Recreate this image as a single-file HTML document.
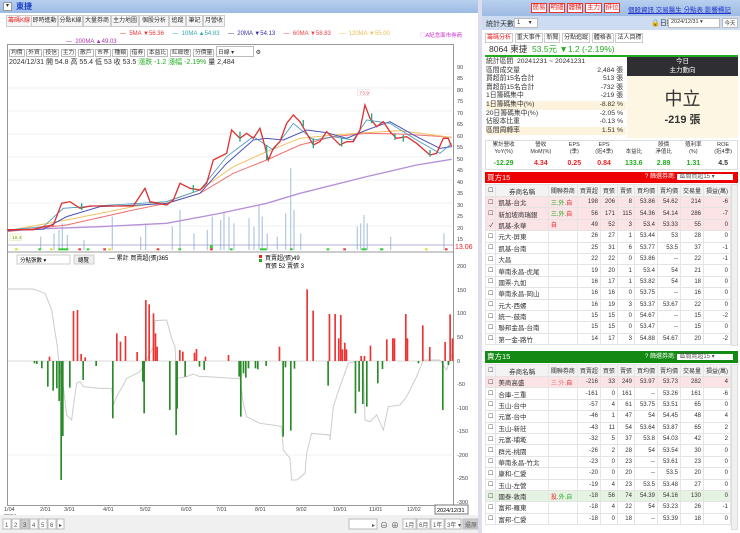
<!DOCTYPE html>
<html><head><meta charset="utf-8">
<style>
*{margin:0;padding:0;box-sizing:border-box}
body{width:740px;height:533px;overflow:hidden;background:#fff;font-family:"Liberation Sans","Noto Sans CJK TC",sans-serif;font-size:7px;color:#333;position:relative}
.a{position:absolute}
.bar{background:linear-gradient(#b9d0ee,#9dbbe3)}
.tab{position:absolute;top:15px;height:12px;border:1px solid #ccc;background:#f6f6f6;font-size:6px;line-height:10px;text-align:center;white-space:nowrap;overflow:hidden}
.rb{position:absolute;top:3px;height:10px;border:1px solid #e33;background:#fff;color:#e22;font-size:6.5px;line-height:8px;text-align:center}
table{border-collapse:collapse}
.t td{height:11.4px;border:1px solid #e4e4e4;font-size:6px;text-align:right;padding:0 2px;white-space:nowrap;overflow:hidden}
.t td:nth-child(1){width:7px}
.t td:nth-child(2){text-align:left;width:54px;font-size:6.5px}
.t td:nth-child(3){text-align:left;width:28px;color:#e22}
.pk td{background:#fbe3e6}.gr td{background:#e6f3e3}
.th td{background:#f3f3f3;text-align:center!important;height:12px}
.st div{height:8.6px;line-height:8.6px;font-size:6.8px;position:relative}
.st span{position:absolute;right:3px}
</style></head><body>
<div class="a bar" style="left:0;top:0;width:478px;height:13px"></div>
<div class="a" style="left:3px;top:2px;width:9px;height:9px;background:#fff;border:1px solid #999;font-size:6px;line-height:7px;text-align:center">▾</div>
<div class="a" style="left:16px;top:1px;font-size:8px;color:#1a3fc8;font-weight:bold">東捷</div>
<div class="tab" style="left:6px;width:26px;color:#e22">籌碼K線</div>
<div class="tab" style="left:31px;width:27px">即時進動</div>
<div class="tab" style="left:58px;width:25px">分點K線</div>
<div class="tab" style="left:83px;width:28px">大量券商</div>
<div class="tab" style="left:111px;width:28px">主力地圖</div>
<div class="tab" style="left:139px;width:30px">個股分析</div>
<div class="tab" style="left:169px;width:17px">追蹤</div>
<div class="tab" style="left:186px;width:17px">筆記</div>
<div class="tab" style="left:203px;width:22px">月營收</div>
<div class="a" style="left:120px;top:31px;font-size:6px;white-space:nowrap"><span style="color:#e33">— &nbsp;5MA ▼56.36</span> &nbsp;&nbsp;&nbsp;&nbsp;<span style="color:#3aa">— &nbsp;10MA ▲54.83</span> &nbsp;&nbsp;&nbsp;&nbsp;<span style="color:#33a">— &nbsp;20MA ▼54.13</span> &nbsp;&nbsp;&nbsp;&nbsp;<span style="color:#e44">— &nbsp;60MA ▼58.83</span> &nbsp;&nbsp;&nbsp;&nbsp;<span style="color:#eb5">— &nbsp;120MA ▼55.00</span></div>
<div class="a" style="left:420px;top:31px;font-size:5.5px;color:#c3c">◯A紀念面市券商</div>
<div class="a" style="left:66px;top:39px;font-size:6px;color:#a3a">— &nbsp;200MA ▲49.03</div>
<div class="a" style="left:7px;top:44px;width:447px;height:462px;border:1px solid #999"></div>
<div class="a" style="left:9px;top:46px;font-size:5.8px;white-space:nowrap">
<span style="border:1px solid #bbb;padding:0 1px">均價</span> <span style="border:1px solid #bbb;padding:0 1px">外資</span> <span style="border:1px solid #bbb;padding:0 1px">投信</span> <span style="border:1px solid #bbb;padding:0 1px">主力</span> <span style="border:1px solid #bbb;padding:0 1px">散戶</span> <span style="border:1px solid #bbb;padding:0 1px">市界</span> <span style="border:1px solid #bbb;padding:0 1px">種類</span> <span style="border:1px solid #bbb;padding:0 1px">借券</span> <span style="border:1px solid #bbb;padding:0 1px">本益比</span> <span style="border:1px solid #bbb;padding:0 1px">紅綠燈</span> <span style="border:1px solid #bbb;padding:0 1px">分價量</span> <span style="border:1px solid #bbb;padding:0 1px;display:inline-block;width:38px">日線 ▾</span> ⚙</div>
<div class="a" style="left:9px;top:57px;font-size:7px;white-space:nowrap">2024/12/31 開 54.8 高 55.4 低 53 收 53.5 <span style="color:#2a2"> 漲跌 -1.2 漲幅 -2.19%</span> 量 2,484</div>
<svg class="a" style="left:0;top:0" width="480" height="533">
<g font-size="5.5" fill="#444">
<text x="457" y="69">90</text><text x="457" y="80">85</text><text x="457" y="92">80</text><text x="457" y="103">75</text><text x="457" y="115">70</text><text x="457" y="126">65</text><text x="457" y="138">60</text><text x="457" y="149">55</text><text x="457" y="161">50</text><text x="457" y="172">45</text><text x="457" y="184">40</text><text x="457" y="195">35</text><text x="457" y="207">30</text><text x="457" y="218">25</text><text x="457" y="230">20</text><text x="457" y="241">15</text></g>
<g transform="translate(0,60) scale(0.3333)">
<g stroke="#eee" stroke-width="2"><line x1="24" y1="84" x2="1360" y2="84"/><line x1="24" y1="153" x2="1360" y2="153"/><line x1="24" y1="222" x2="1360" y2="222"/><line x1="24" y1="291" x2="1360" y2="291"/><line x1="24" y1="360" x2="1360" y2="360"/><line x1="24" y1="429" x2="1360" y2="429"/><line x1="24" y1="498" x2="1360" y2="498"/></g>
<g fill="#b8cce4">
<rect x="120" y="530" width="4" height="40"/><rect x="160" y="520" width="4" height="50"/><rect x="175" y="510" width="4" height="60"/><rect x="185" y="490" width="4" height="80"/><rect x="200" y="525" width="4" height="45"/><rect x="250" y="540" width="4" height="30"/><rect x="335" y="470" width="4" height="100"/><rect x="420" y="530" width="4" height="40"/><rect x="435" y="490" width="4" height="80"/><rect x="515" y="500" width="4" height="70"/><rect x="538" y="450" width="4" height="120"/><rect x="580" y="520" width="4" height="50"/><rect x="620" y="510" width="4" height="60"/><rect x="635" y="470" width="4" height="100"/><rect x="660" y="480" width="4" height="90"/><rect x="670" y="455" width="4" height="115"/><rect x="685" y="470" width="4" height="100"/><rect x="700" y="490" width="4" height="80"/><rect x="745" y="475" width="4" height="95"/><rect x="760" y="500" width="4" height="70"/><rect x="775" y="435" width="4" height="135"/><rect x="785" y="470" width="4" height="100"/><rect x="800" y="520" width="4" height="50"/><rect x="830" y="530" width="4" height="40"/><rect x="855" y="460" width="4" height="110"/><rect x="870" y="325" width="4" height="245"/><rect x="880" y="450" width="4" height="120"/><rect x="900" y="520" width="4" height="50"/><rect x="1070" y="500" width="4" height="70"/><rect x="1080" y="490" width="4" height="80"/><rect x="1090" y="465" width="4" height="105"/><rect x="1100" y="490" width="4" height="80"/><rect x="1170" y="530" width="4" height="40"/><rect x="1330" y="520" width="4" height="50"/></g>
<polyline fill="none" stroke="#b58fd8" stroke-width="4" points="22,510 300,500 500,490 650,462 800,430 900,400 1100,350 1250,315 1355,298"/>
<polyline fill="none" stroke="#f07070" stroke-width="3" points="22,515 200,495 400,450 500,430 600,400 700,340 800,300 900,255 1000,230 1100,220 1200,222 1300,228 1355,232"/>
<polyline fill="none" stroke="#f0c060" stroke-width="3" points="22,512 200,480 400,440 500,425 600,390 700,320 800,275 900,235 1000,225 1100,218 1200,212 1300,225 1355,232"/>
<polyline fill="none" stroke="#4a55b8" stroke-width="3" points="22,512 130,508 200,470 300,440 420,435 500,430 600,400 680,310 760,240 800,235 850,240 920,210 980,218 1040,235 1100,210 1170,185 1250,230 1320,265 1355,260"/>
<polyline fill="none" stroke="#49b" stroke-width="2.5" points="22,510 130,500 190,445 300,437 420,430 500,425 600,390 680,290 760,230 820,270 880,190 940,240 1000,230 1060,240 1100,180 1170,190 1250,240 1320,280 1355,250"/>
<polyline fill="none" stroke="#d33" stroke-width="4" points="22,509 100,509 130,500 160,495 185,430 210,425 240,445 270,438 330,438 400,438 435,385 450,425 500,435 520,420 540,370 570,385 600,390 620,370 640,300 660,290 680,280 695,210 720,235 740,220 760,235 780,205 795,260 805,300 820,265 840,245 860,190 880,165 900,185 920,220 940,255 960,245 980,215 1000,235 1020,255 1040,245 1060,245 1080,210 1095,135 1110,175 1130,200 1150,185 1170,215 1190,235 1220,230 1250,250 1290,285 1310,280 1330,235 1345,235 1355,260"/>
<g stroke="#2a8" stroke-width="4"><line x1="800" y1="255" x2="800" y2="300"/><line x1="940" y1="235" x2="940" y2="265"/><line x1="1025" y1="235" x2="1025" y2="260"/><line x1="1185" y1="220" x2="1185" y2="240"/><line x1="1290" y1="270" x2="1290" y2="290"/><line x1="245" y1="430" x2="245" y2="450"/><line x1="580" y1="375" x2="580" y2="395"/><line x1="720" y1="215" x2="720" y2="245"/><line x1="1115" y1="160" x2="1115" y2="190"/><line x1="910" y1="180" x2="910" y2="200"/><line x1="1210" y1="225" x2="1210" y2="245"/></g>
<rect x="1072" y="88" width="38" height="18" fill="#fff" stroke="#ccc"/><text x="1078" y="103" font-size="15" fill="#e55">73.9</text>
<rect x="30" y="522" width="34" height="20" fill="#ffe" stroke="#cc8"/><text x="36" y="537" font-size="15" fill="#6a3">18.4</text>
<line x1="24" y1="555" x2="1360" y2="555" stroke="#99c" stroke-width="2"/>
<g fill="#3c3"><rect x="115" y="565" width="8" height="6"/><rect x="175" y="565" width="30" height="6"/><rect x="260" y="565" width="8" height="6"/><rect x="535" y="565" width="8" height="6"/><rect x="630" y="555" width="8" height="10"/><rect x="690" y="565" width="8" height="6"/><rect x="780" y="565" width="20" height="6"/><rect x="870" y="565" width="8" height="6"/><rect x="980" y="565" width="8" height="6"/><rect x="1085" y="565" width="15" height="6"/><rect x="1140" y="565" width="10" height="6"/></g>
<g fill="#e33"><rect x="235" y="565" width="8" height="6"/><rect x="310" y="565" width="8" height="6"/><rect x="470" y="565" width="8" height="6"/><rect x="630" y="565" width="8" height="6"/><rect x="1030" y="565" width="8" height="6"/><rect x="1335" y="565" width="8" height="6"/></g>
<g fill="#dd3"><rect x="45" y="565" width="8" height="6"/><rect x="150" y="565" width="8" height="6"/><rect x="325" y="565" width="8" height="6"/><rect x="1275" y="565" width="8" height="6"/></g>
</g>
<text x="455" y="249" font-size="7" fill="#e22">13.06</text>
<line x1="8" y1="252" x2="453" y2="252" stroke="#999"/>
<g font-size="5.5" fill="#444"><text x="457" y="268">200</text><text x="457" y="292">150</text><text x="457" y="315">100</text><text x="457" y="339">50</text><text x="457" y="363">0</text><text x="457" y="386">-50</text><text x="457" y="410">-100</text><text x="457" y="433">-150</text><text x="457" y="457">-200</text><text x="457" y="480">-250</text><text x="457" y="504">-300</text></g>
<rect x="17" y="255" width="53" height="9" fill="#fff" stroke="#ccc"/><text x="20" y="262" font-size="5.5">分點張數 ▾</text>
<rect x="74" y="255" width="20" height="9" fill="#eee" stroke="#ccc"/><text x="78" y="262" font-size="5.5">總覽</text>
<text x="109" y="260" font-size="6">— 累計 買賣超(張)365</text>
<rect x="259" y="255" width="3" height="3" fill="#e22"/><rect x="259" y="259" width="3" height="3" fill="#2a2"/>
<text x="265" y="260" font-size="6">買賣超(張)49</text><text x="265" y="268" font-size="6">買張 52 賣張 3</text>
<g transform="translate(0,250) scale(0.3333)">
<line x1="24" y1="333" x2="1360" y2="333" stroke="#ccc" stroke-width="2"/>
<line x1="24" y1="615" x2="1360" y2="615" stroke="#eee" stroke-width="2"/>
<polyline fill="none" stroke="#ccc" stroke-width="3" points="22,117 100,117 135,130 155,180 172,290 178,355 190,410 200,495 215,510 220,470 230,400 240,395 250,410 300,415 335,415 340,465 350,440 370,405 380,385 420,365 440,330 460,290 465,212 500,210 515,265 525,290 530,385 560,380 580,372 600,380 620,380 700,385 720,385 730,460 740,500 780,520 830,527 845,530 850,600 870,625 875,690 890,690 915,670 920,610 935,550 990,555 990,570 1000,470 1020,410 1045,340 1090,330 1095,510 1110,515 1130,495 1150,540 1165,470 1200,465 1220,440 1250,380 1270,330 1320,330 1340,360 1360,300"/>
<g fill="#e33">
<rect x="146" y="320" width="5" height="13"/><rect x="218" y="183" width="5" height="150"/><rect x="230" y="180" width="5" height="153"/><rect x="241" y="312" width="5" height="21"/><rect x="253" y="322" width="5" height="11"/><rect x="348" y="250" width="5" height="83"/><rect x="359" y="275" width="5" height="58"/><rect x="374" y="258" width="5" height="75"/><rect x="409" y="306" width="5" height="27"/><rect x="435" y="150" width="5" height="183"/><rect x="445" y="163" width="5" height="170"/><rect x="458" y="190" width="5" height="143"/><rect x="464" y="250" width="5" height="83"/><rect x="469" y="290" width="5" height="43"/><rect x="537" y="300" width="5" height="33"/><rect x="546" y="305" width="5" height="28"/><rect x="581" y="308" width="5" height="25"/><rect x="587" y="297" width="5" height="36"/><rect x="614" y="320" width="5" height="13"/><rect x="683" y="315" width="5" height="18"/><rect x="836" y="290" width="5" height="43"/><rect x="919" y="118" width="5" height="215"/><rect x="937" y="182" width="5" height="151"/><rect x="986" y="192" width="5" height="141"/><rect x="1003" y="192" width="5" height="141"/><rect x="1014" y="265" width="5" height="68"/><rect x="1020" y="195" width="5" height="138"/><rect x="1025" y="298" width="5" height="35"/><rect x="1032" y="278" width="5" height="55"/><rect x="1037" y="298" width="5" height="35"/><rect x="1081" y="318" width="5" height="15"/><rect x="1091" y="318" width="5" height="15"/><rect x="1109" y="287" width="5" height="46"/><rect x="1158" y="268" width="5" height="65"/><rect x="1176" y="265" width="5" height="68"/><rect x="1181" y="265" width="5" height="68"/><rect x="1215" y="192" width="5" height="141"/><rect x="1220" y="265" width="5" height="68"/><rect x="1266" y="226" width="5" height="107"/><rect x="1287" y="291" width="5" height="42"/><rect x="1333" y="276" width="5" height="57"/><rect x="1348" y="193" width="5" height="140"/><rect x="1355" y="265" width="5" height="68"/></g>
<g fill="#2a8a2a">
<rect x="101" y="333" width="5" height="7"/><rect x="108" y="333" width="5" height="9"/><rect x="123" y="333" width="5" height="22"/><rect x="141" y="333" width="5" height="77"/><rect x="157" y="333" width="5" height="89"/><rect x="168" y="333" width="5" height="82"/><rect x="175" y="333" width="5" height="120"/><rect x="181" y="333" width="5" height="357"/><rect x="186" y="333" width="5" height="225"/><rect x="207" y="333" width="5" height="80"/><rect x="247" y="333" width="5" height="57"/><rect x="286" y="333" width="5" height="15"/><rect x="336" y="333" width="5" height="172"/><rect x="426" y="333" width="5" height="62"/><rect x="430" y="333" width="5" height="157"/><rect x="507" y="333" width="5" height="147"/><rect x="526" y="333" width="5" height="222"/><rect x="529" y="333" width="5" height="143"/><rect x="553" y="333" width="5" height="47"/><rect x="596" y="333" width="5" height="17"/><rect x="610" y="333" width="5" height="27"/><rect x="715" y="333" width="5" height="47"/><rect x="720" y="333" width="5" height="167"/><rect x="728" y="333" width="5" height="37"/><rect x="735" y="333" width="5" height="50"/><rect x="743" y="333" width="5" height="22"/><rect x="764" y="333" width="5" height="22"/><rect x="771" y="333" width="5" height="25"/><rect x="796" y="333" width="5" height="15"/><rect x="847" y="333" width="5" height="227"/><rect x="854" y="333" width="5" height="19"/><rect x="870" y="333" width="5" height="209"/><rect x="881" y="333" width="5" height="23"/><rect x="982" y="333" width="5" height="74"/><rect x="1064" y="333" width="5" height="157"/><rect x="1075" y="333" width="5" height="92"/><rect x="1086" y="333" width="5" height="129"/><rect x="1098" y="333" width="5" height="137"/><rect x="1131" y="333" width="5" height="67"/><rect x="1145" y="333" width="5" height="24"/><rect x="1253" y="333" width="5" height="7"/><rect x="1326" y="333" width="5" height="147"/><rect x="1343" y="333" width="5" height="12"/></g>
</g>
<g font-size="5.5" fill="#444"><text x="4" y="511">1/04</text><text x="4" y="518">2024</text><text x="40" y="511">2/01</text><text x="64" y="511">3/01</text><text x="103" y="511">4/01</text><text x="140" y="511">5/02</text><text x="181" y="511">6/03</text><text x="216" y="511">7/01</text><text x="255" y="511">8/01</text><text x="296" y="511">9/02</text><text x="333" y="511">10/01</text><text x="369" y="511">11/01</text><text x="407" y="511">12/02</text></g>
<rect x="435" y="505" width="33" height="9" fill="#fff" stroke="#777"/><text x="437" y="512" font-size="5.5">2024/12/31</text>
<rect x="0" y="515" width="480" height="18" fill="#f0f0f0"/>
<g font-size="6" fill="#555"><rect x="3" y="519" width="8" height="10" fill="#fff" stroke="#bbb"/><text x="5" y="527">1</text><rect x="12" y="519" width="8" height="10" fill="#fff" stroke="#bbb"/><text x="14" y="527">2</text><rect x="21" y="519" width="8" height="10" fill="#ccc" stroke="#bbb"/><text x="23" y="527">3</text><rect x="30" y="519" width="8" height="10" fill="#fff" stroke="#bbb"/><text x="32" y="527">4</text><rect x="39" y="519" width="8" height="10" fill="#fff" stroke="#bbb"/><text x="41" y="527">5</text><rect x="48" y="519" width="8" height="10" fill="#fff" stroke="#bbb"/><text x="50" y="527">6</text><rect x="57" y="519" width="7" height="10" fill="#fff" stroke="#bbb"/><text x="59" y="527">▸</text>
<rect x="349" y="519" width="28" height="10" fill="#fff" stroke="#bbb"/><text x="372" y="527">▸</text><text x="380" y="528" font-size="8">⊖</text><text x="391" y="528" font-size="8">⊕</text>
<rect x="403" y="519" width="13" height="10" fill="#fff" stroke="#bbb"/><text x="405" y="527">1月</text><rect x="417" y="519" width="13" height="10" fill="#fff" stroke="#bbb"/><text x="419" y="527">6月</text><rect x="431" y="519" width="13" height="10" fill="#fff" stroke="#bbb"/><text x="433" y="527">1年</text><rect x="445" y="519" width="16" height="10" fill="#fff" stroke="#bbb"/><text x="447" y="527">3年 ▾</text><rect x="463" y="519" width="15" height="10" fill="#ccc" stroke="#bbb"/><text x="465" y="527">還原</text></g>
</svg>
<div class="a" style="left:478px;top:0;width:4px;height:533px;background:#dde"></div>
<div class="a bar" style="left:482px;top:0;width:258px;height:16px"></div>
<div class="rb" style="left:531px;width:16px">簡易</div><div class="rb" style="left:549px;width:16px">明細</div><div class="rb" style="left:567px;width:16px">體積</div><div class="rb" style="left:585px;width:17px">主力</div><div class="rb" style="left:604px;width:16px">排位</div>
<div class="a" style="left:628px;top:4px;font-size:6.5px;color:#23c;text-decoration:underline;white-space:nowrap">個股資訊 交易醫生 分點表 影響標記</div>
<div class="a" style="left:482px;top:16px;width:258px;height:14px;background:#cddcf0"></div>
<div class="a" style="left:486px;top:19px;font-size:7px">統計天數</div>
<div class="a" style="left:514px;top:18px;width:24px;height:10px;background:#fff;border:1px solid #bbb;font-size:6px;padding-left:2px">1 &nbsp;&nbsp;&nbsp;&nbsp;▾</div>
<div class="a" style="left:651px;top:18px;font-size:7px">🔒日期</div>
<div class="a" style="left:668px;top:18px;width:52px;height:10px;background:#fff;border:1px solid #bbb;font-size:5.5px;padding-left:2px">2024/12/31 ▾</div>
<div class="a" style="left:722px;top:18px;width:16px;height:10px;background:#fff;border:1px solid #bbb;font-size:5.5px;text-align:center">今天</div>
<div class="a" style="left:485px;top:32px;font-size:6px;white-space:nowrap"><span style="border:1px solid #ccc;padding:1px;color:#e22">籌碼分析</span> <span style="border:1px solid #ccc;padding:1px">重大事件</span> <span style="border:1px solid #ccc;padding:1px">新聞</span> <span style="border:1px solid #ccc;padding:1px">分點追蹤</span> <span style="border:1px solid #ccc;padding:1px">體格表</span> <span style="border:1px solid #ccc;padding:1px">法人目標</span></div>
<div class="a" style="left:485px;top:43px;width:253px;height:14px;border-bottom:2px solid #2a2;font-size:8.5px;line-height:13px;padding-left:4px">8064 東捷 &nbsp;<span style="color:#2a2">53.5元 ▼1.2 (-2.19%)</span></div>
<div class="a st" style="left:486px;top:58px;width:140px">
<div>統計區間 &nbsp;20241231 ~ 20241231</div><div>區間成交量<span>2,484 張</span></div><div>買超前15名合計<span>513 張</span></div><div>賣超前15名合計<span>-732 張</span></div><div>1日籌碼集中<span>-219 張</span></div><div style="background:#fdf3dc">1日籌碼集中(%)<span>-8.82 %</span></div><div>20日籌碼集中(%)<span>-2.05 %</span></div><div>佔股本比重<span>-0.13 %</span></div><div style="background:#fdf3dc">區間周轉率<span>1.51 %</span></div></div>
<div class="a" style="left:627px;top:57px;width:111px;height:19px;background:#2f2f33;color:#fff;font-size:6.5px;text-align:center;line-height:9px">今日<br>主力動向</div>
<div class="a" style="left:627px;top:76px;width:111px;height:62px;background:#fdf6e2;text-align:center"><div style="font-size:18px;margin-top:9px">中立</div><div style="font-size:11px;font-weight:bold">-219 張</div></div>
<div class="a" style="left:485px;top:140px;width:253px;height:30px;border:1px solid #ddd"></div>
<div class="a" style="left:485px;top:142px;width:253px;font-size:5.5px;display:flex;text-align:center;line-height:7px">
<div style="flex:1">累計營收<br>YoY(%)</div><div style="flex:1">營收<br>MoM(%)</div><div style="flex:.8">EPS<br>(季)</div><div style="flex:.8">EPS<br>(近4季)</div><div style="flex:.8"><br>本益比</div><div style="flex:.8">股價<br>淨值比</div><div style="flex:.8">殖利率<br>(%)</div><div style="flex:.8">ROE<br>(近4季)</div></div>
<div class="a" style="left:485px;top:160px;width:253px;font-size:7px;font-weight:bold;display:flex;text-align:center">
<div style="flex:1;color:#2a2">-12.29</div><div style="flex:1;color:#e22">4.34</div><div style="flex:.8;color:#e22">0.25</div><div style="flex:.8;color:#e22">0.84</div><div style="flex:.8;color:#2a2">133.6</div><div style="flex:.8;color:#2a2">2.89</div><div style="flex:.8;color:#2a2">1.31</div><div style="flex:.8">4.5</div></div>
<div class="a" style="left:485px;top:172px;width:253px;height:11px;background:#e00;color:#fff;font-size:7.5px;padding-left:2px;line-height:11px">買方15<span style="position:absolute;left:160px;font-size:6px">? 篩選券商: <span style="background:#fff;color:#555;padding:0 18px 0 2px">區間買超15 ▾</span></span></div>
<table class="t a" style="left:485px;top:184px;width:246px">
<tr class="th"><td>☐</td><td style="text-align:center">券商名稱</td><td style="color:#333;text-align:center">關聯券商</td><td>買賣超</td><td>買張</td><td>賣張</td><td>買均價</td><td>賣均價</td><td>交易量</td><td>損益(萬)</td></tr>
<tr class="pk"><td>☐</td><td>凱基-台北</td><td><span style="color:#2a2">三.外.</span>自</td><td>198</td><td>206</td><td>8</td><td>53.86</td><td>54.62</td><td>214</td><td>-6</td></tr>
<tr class="pk"><td>☐</td><td>新加坡商瑞銀</td><td><span style="color:#2a2">三.外.</span>自</td><td>56</td><td>171</td><td>115</td><td>54.36</td><td>54.14</td><td>286</td><td>-7</td></tr>
<tr class="pk"><td>✓</td><td>凱基-永華</td><td>自</td><td>49</td><td>52</td><td>3</td><td>53.4</td><td>53.33</td><td>55</td><td>0</td></tr>
<tr><td>☐</td><td>元大-屏東</td><td></td><td>26</td><td>27</td><td>1</td><td>53.44</td><td>53</td><td>28</td><td>0</td></tr>
<tr><td>☐</td><td>凱基-台南</td><td></td><td>25</td><td>31</td><td>6</td><td>53.77</td><td>53.5</td><td>37</td><td>-1</td></tr>
<tr><td>☐</td><td>大昌</td><td></td><td>22</td><td>22</td><td>0</td><td>53.86</td><td>--</td><td>22</td><td>-1</td></tr>
<tr><td>☐</td><td>華南永昌-虎尾</td><td></td><td>19</td><td>20</td><td>1</td><td>53.4</td><td>54</td><td>21</td><td>0</td></tr>
<tr><td>☐</td><td>國票-九如</td><td></td><td>16</td><td>17</td><td>1</td><td>53.82</td><td>54</td><td>18</td><td>0</td></tr>
<tr><td>☐</td><td>華南永昌-岡山</td><td></td><td>16</td><td>16</td><td>0</td><td>53.75</td><td>--</td><td>16</td><td>0</td></tr>
<tr><td>☐</td><td>元大-西螺</td><td></td><td>16</td><td>19</td><td>3</td><td>53.37</td><td>53.67</td><td>22</td><td>0</td></tr>
<tr><td>☐</td><td>統一-鼓南</td><td></td><td>15</td><td>15</td><td>0</td><td>54.67</td><td>--</td><td>15</td><td>-2</td></tr>
<tr><td>☐</td><td>聯邦金昌-台南</td><td></td><td>15</td><td>15</td><td>0</td><td>53.47</td><td>--</td><td>15</td><td>0</td></tr>
<tr><td>☐</td><td>第一金-路竹</td><td></td><td>14</td><td>17</td><td>3</td><td>54.88</td><td>54.67</td><td>20</td><td>-2</td></tr>
</table>
<div class="a" style="left:731px;top:184px;width:7px;height:162px;background:#f0f0f0;border:1px solid #ddd"></div>
<div class="a" style="left:485px;top:351px;width:253px;height:12px;background:#138a13;color:#fff;font-size:7.5px;padding-left:2px;line-height:12px">賣方15<span style="position:absolute;left:160px;font-size:6px">? 篩選券商: <span style="background:#fff;color:#555;padding:0 18px 0 2px">區間賣超15 ▾</span></span></div>
<table class="t a" style="left:485px;top:364px;width:246px">
<tr class="th"><td>☐</td><td style="text-align:center">券商名稱</td><td style="color:#333;text-align:center">關聯券商</td><td>買賣超</td><td>買張</td><td>賣張</td><td>買均價</td><td>賣均價</td><td>交易量</td><td>損益(萬)</td></tr>
<tr class="pk"><td>☐</td><td>美商高盛</td><td><span style="color:#e77">三.外.</span>自</td><td>-216</td><td>33</td><td>249</td><td>53.97</td><td>53.73</td><td>282</td><td>4</td></tr>
<tr><td>☐</td><td>合庫-三重</td><td></td><td>-161</td><td>0</td><td>161</td><td>--</td><td>53.26</td><td>161</td><td>-6</td></tr>
<tr><td>☐</td><td>玉山-台中</td><td></td><td>-57</td><td>4</td><td>61</td><td>53.75</td><td>53.51</td><td>65</td><td>0</td></tr>
<tr><td>☐</td><td>元富-台中</td><td></td><td>-46</td><td>1</td><td>47</td><td>54</td><td>54.45</td><td>48</td><td>4</td></tr>
<tr><td>☐</td><td>玉山-新莊</td><td></td><td>-43</td><td>11</td><td>54</td><td>53.64</td><td>53.87</td><td>65</td><td>2</td></tr>
<tr><td>☐</td><td>元富-埔墘</td><td></td><td>-32</td><td>5</td><td>37</td><td>53.8</td><td>54.03</td><td>42</td><td>2</td></tr>
<tr><td>☐</td><td>群光-桃園</td><td></td><td>-26</td><td>2</td><td>28</td><td>54</td><td>53.54</td><td>30</td><td>0</td></tr>
<tr><td>☐</td><td>華南永昌-竹北</td><td></td><td>-23</td><td>0</td><td>23</td><td>--</td><td>53.61</td><td>23</td><td>0</td></tr>
<tr><td>☐</td><td>康和-仁愛</td><td></td><td>-20</td><td>0</td><td>20</td><td>--</td><td>53.5</td><td>20</td><td>0</td></tr>
<tr><td>☐</td><td>玉山-左營</td><td></td><td>-19</td><td>4</td><td>23</td><td>53.5</td><td>53.48</td><td>27</td><td>0</td></tr>
<tr class="gr"><td>☐</td><td>國泰-敦南</td><td>投.<span style="color:#2a2">外.自</span></td><td>-18</td><td>56</td><td>74</td><td>54.39</td><td>54.16</td><td>130</td><td>0</td></tr>
<tr><td>☐</td><td>富邦-羅東</td><td></td><td>-18</td><td>4</td><td>22</td><td>54</td><td>53.23</td><td>26</td><td>-1</td></tr>
<tr><td>☐</td><td>富邦-仁愛</td><td></td><td>-18</td><td>0</td><td>18</td><td>--</td><td>53.39</td><td>18</td><td>0</td></tr>
</table>
<div class="a" style="left:731px;top:364px;width:7px;height:166px;background:#f0f0f0;border:1px solid #ddd"></div>
</body></html>
